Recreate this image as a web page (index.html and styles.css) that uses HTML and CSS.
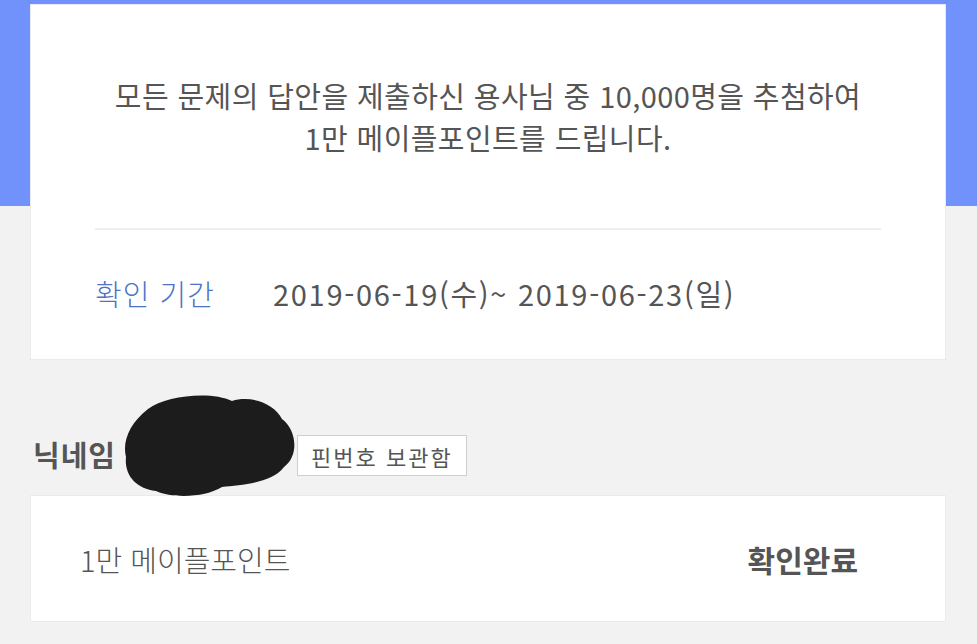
FILE: index.html
```html
<!DOCTYPE html>
<html lang="ko">
<head>
    <meta charset="UTF-8">
    <meta name="viewport" content="width=device-width, initial-scale=1.0">
    <title>메이플 퀴즈 결과 확인</title>
    <link rel="stylesheet" href="styles.css">
</head>
<body>
    <div class="page">
        <div class="card notice-card">
            <p class="notice-text">모든 문제의 답안을 제출하신 용사님 중 10,000명을 추첨하여<br>1만 메이플포인트를 드립니다.</p>
            <hr class="divider">
            <div class="period">
                <span class="period-label">확인 기간</span>
                <span class="period-date">2019-06-19(수)~ 2019-06-23(일)</span>
            </div>
        </div>

        <div class="nick-row">
            <span class="nick-label">닉네임</span>
            <span class="nick-value">
                <!-- 가려진 닉네임 -->
                <svg class="blot" width="176" height="106" viewBox="0 0 176 106">
                    <path d="M26 16 C44 2 90 -2 110 8 C128 2 152 10 160 26 C174 36 178 62 162 74 C150 90 120 92 100 94 C84 104 52 106 34 98 C14 96 2 82 4 64 C0 48 8 30 26 16 Z" fill="#1c1c1c"/>
                </svg>
            </span>
            <button class="btn-pin">핀번호 보관함</button>
        </div>

        <div class="card result-card">
            <span class="result-name">1만 메이플포인트</span>
            <span class="result-state">확인완료</span>
        </div>
    </div>
</body>
</html>
```

FILE: styles.css
```css
body {
    margin: 0;
    font-family: "Noto Sans CJK KR", "Noto Sans", sans-serif;
    color: #555;
    background-color: #f2f2f2;
}
.page {
    padding: 5px 32px 24px 31px;
    background: linear-gradient(#7292fb 0, #7292fb 206px, #f2f2f2 206px);
}
.card {
    background: white;
    box-shadow: 0 0 0 1px #ebebeb;
}
.notice-card {
    padding: 69px 64px 46px;
}
.notice-text {
    margin: 0;
    text-align: center;
    font-size: 29px;
    line-height: 42px;
    letter-spacing: 0.4px;
    color: #555;
}
.divider {
    margin: 70px 0 0;
    border: 0;
    border-top: 2px solid #eeeeee;
}
.period {
    display: flex;
    align-items: center;
    margin-top: 43px;
    line-height: 40px;
    font-size: 29px;
}
.period-label {
    width: 178px;
    color: #4f72c8;
    font-weight: 300;
    letter-spacing: 1px;
}
.period-date {
    color: #555;
    letter-spacing: 1.7px;
}
.nick-row {
    display: flex;
    align-items: center;
    margin: 76px 0 20px 2px;
    height: 41px;
}
.nick-label {
    font-size: 29px;
    font-weight: 700;
    letter-spacing: 1px;
    color: #555;
    margin-top: -4px;
}
.nick-value {
    position: relative;
    width: 181px;
    height: 41px;
}
.blot {
    position: absolute;
    left: 6px;
    top: -42px;
}
.btn-pin {
    height: 41px;
    padding: 0 13px;
    background: white;
    border: 1px solid #cfcfcf;
    font-family: inherit;
    font-size: 22px;
    letter-spacing: 2px;
    color: #555;
}
.result-card {
    display: flex;
    justify-content: space-between;
    align-items: center;
    height: 125px;
    padding: 0 87px 0 49px;
    font-size: 29px;
}
.result-name {
    font-weight: 300;
}
.result-state {
    font-size: 30px;
    font-weight: 700;
}
```
